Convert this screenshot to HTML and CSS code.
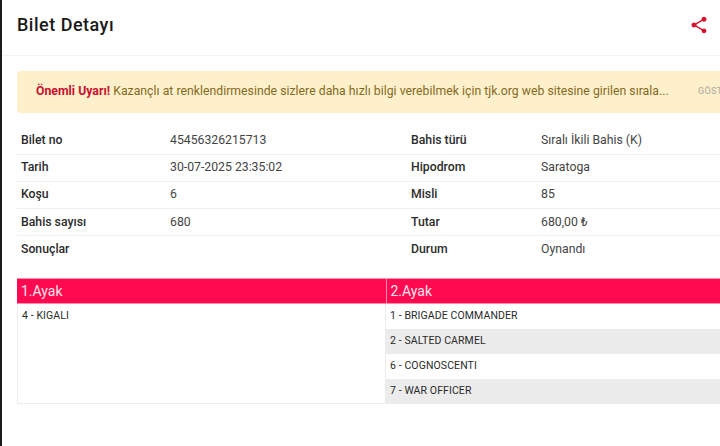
FILE: index.html
```html
<!DOCTYPE html>
<html lang="tr">
<head>
<meta charset="utf-8">
<title>Bilet Detayı</title>
<link rel="stylesheet" href="styles.css">
</head>
<body>
<div class="modal">
  <header class="head">
    <h1 class="title">Bilet Detayı</h1>
    <svg class="share" viewBox="0 0 24 24" width="20" height="20" aria-hidden="true"><path d="M18 16.08c-.76 0-1.44.3-1.96.77L8.91 12.7c.05-.23.09-.46.09-.7s-.04-.47-.09-.7l7.05-4.11c.54.5 1.25.81 2.04.81 1.66 0 3-1.34 3-3s-1.34-3-3-3-3 1.34-3 3c0 .24.04.47.09.7L8.04 9.81C7.5 9.31 6.79 9 6 9c-1.66 0-3 1.34-3 3s1.34 3 3 3c.79 0 1.5-.31 2.04-.81l7.12 4.16c-.05.21-.08.43-.08.65 0 1.61 1.31 2.92 2.92 2.92s2.92-1.31 2.92-2.92-1.31-2.92-2.92-2.92z"/></svg>
  </header>
  <div class="content">
    <div class="alert">
      <p class="alert-text"><strong class="alert-strong">Önemli Uyarı!</strong> Kazançlı at renklendirmesinde sizlere daha hızlı bilgi verebilmek için tjk.org web sitesine girilen sırala...</p>
      <span class="alert-more">GÖSTER</span>
    </div>
    <div class="info">
      <div class="row"><span class="label">Bilet no</span><span class="value">45456326215713</span><span class="label">Bahis türü</span><span class="value">Sıralı İkili Bahis (K)</span></div>
      <div class="row"><span class="label">Tarih</span><span class="value">30-07-2025 23:35:02</span><span class="label">Hipodrom</span><span class="value">Saratoga</span></div>
      <div class="row"><span class="label">Koşu</span><span class="value">6</span><span class="label">Misli</span><span class="value">85</span></div>
      <div class="row"><span class="label">Bahis sayısı</span><span class="value">680</span><span class="label">Tutar</span><span class="value">680,00 ₺</span></div>
      <div class="row"><span class="label">Sonuçlar</span><span class="value"></span><span class="label">Durum</span><span class="value">Oynandı</span></div>
    </div>
    <div class="legs">
      <div class="leg leg-first">
        <div class="leg-head">1.Ayak</div>
        <div class="horse">4 - KIGALI</div>
      </div>
      <div class="leg">
        <div class="leg-head">2.Ayak</div>
        <div class="horse">1 - BRIGADE COMMANDER</div>
        <div class="horse alt">2 - SALTED CARMEL</div>
        <div class="horse">6 - COGNOSCENTI</div>
        <div class="horse alt">7 - WAR OFFICER</div>
      </div>
    </div>
  </div>
</div>
</body>
</html>
```
FILE: styles.css
```css
html, body {
  margin: 0;
  height: 100%;
  overflow: hidden;
  background: #fff;
}
body {
  font-family: Roboto, "Liberation Sans", sans-serif;
  color: #333;
}
.modal {
  width: 760px;
  height: 446px;
  box-sizing: border-box;
  border-left: 2px solid #1c1c1c;
  background: #fff;
}
.head {
  height: 56px;
  box-sizing: border-box;
  border-bottom: 1px solid #f3f3f3;
  padding: 0 50px 0 15px;
  display: flex;
  align-items: center;
  justify-content: space-between;
}
.title {
  margin: 0 0 6px;
  font-size: 18px;
  font-weight: 500;
  letter-spacing: 0.5px;
  color: #1a1a1a;
}
.share {
  fill: #d8112f;
  margin: -5px 1px 0 0;
}
.content {
  padding: 15px 0 0 15px;
}
.alert {
  height: 42px;
  box-sizing: border-box;
  background: #fdf0cb;
  border-radius: 4px;
  padding: 0 0 2px 19px;
  display: flex;
  align-items: center;
  font-size: 12.25px;
  letter-spacing: 0.015px;
  color: #856a23;
}
.alert-text {
  margin: 0;
  width: 662px;
  flex: none;
  white-space: nowrap;
}
.alert-strong {
  color: #c8102e;
  font-weight: 700;
}
.alert-more {
  font-size: 9px;
  font-weight: 500;
  color: #b9b5a5;
  letter-spacing: 0.3px;
}
.info {
  margin-top: 14.5px;
}
.row {
  display: grid;
  grid-template-columns: 149px 241px 130px 1fr;
  height: 27.2px;
  box-sizing: border-box;
  padding: 0 0 1.3px 4px;
  align-items: center;
  font-size: 12.25px;
  border-bottom: 1px solid #f0f0f0;
}
.row:last-child {
  border-bottom: 0;
}
.label {
  font-weight: 500;
  color: #2b2b2b;
}
.value {
  color: #444;
}
.legs {
  margin-top: 14.5px;
  display: flex;
  height: 126px;
  border-bottom: 1px solid #ececec;
  box-sizing: border-box;
}
.leg {
  flex: 1;
  min-width: 0;
}
.leg-first {
  flex: none;
  width: 369px;
  box-sizing: border-box;
  border-left: 1px solid #ececec;
  border-right: 1px solid #ececec;
}
.leg-head {
  height: 26px;
  box-sizing: border-box;
  border-top: 1px solid #ff8fae;
  border-bottom: 1px solid #ff8fae;
  background: #ff0a50;
  color: #fde4ea;
  font-size: 14px;
  line-height: 24px;
  padding-left: 4px;
}
.leg-first .leg-head {
  margin: 0 -1px 0 -1px;
  padding-left: 4px;
}
.leg + .leg .leg-head {
  border-left: 1px solid #ff8fae;
  padding-left: 3.5px;
}
.horse {
  height: 25px;
  box-sizing: border-box;
  padding-left: 4px;
  font-size: 10.5px;
  line-height: 24px;
  letter-spacing: 0.1px;
  color: #2a2a2a;
}
.alt {
  background: #ececec;
}
```
